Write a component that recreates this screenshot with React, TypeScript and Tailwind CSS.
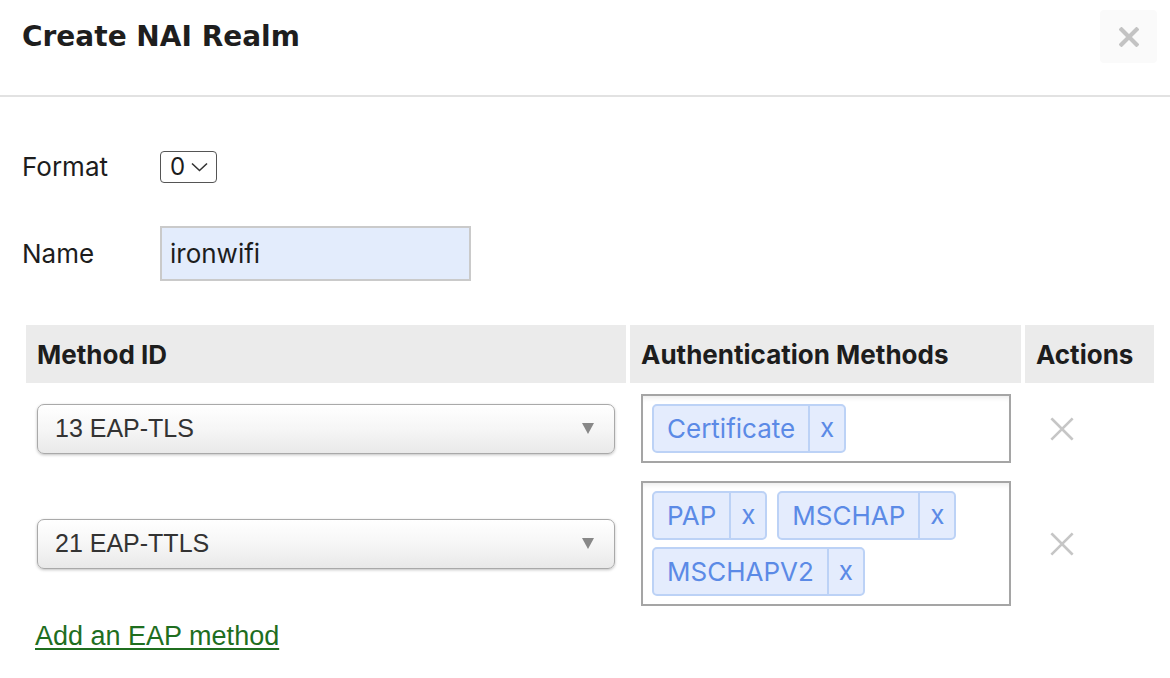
import React from "react"

const XIcon = ({ size, stroke, color }: { size: number; stroke: number; color: string }) => (
  <svg width={size} height={size} viewBox="0 0 24 24" fill="none">
    <path d="M3 3L21 21M21 3L3 21" stroke={color} strokeWidth={stroke} strokeLinecap="square" />
  </svg>
)

const MethodSelect = ({ value }: { value: string }) => (
  <div className="flex h-[50px] w-full items-center justify-between rounded-[7px] border border-[#a9a9a9] bg-gradient-to-b from-white via-[#f6f6f6] to-[#e9e9e9] pl-[17px] pr-[20px] shadow-[0_1px_3px_rgba(0,0,0,0.25)]">
    <span className="text-[25px] text-[#333]" style={{ fontFamily: '"Liberation Sans", Arial, sans-serif' }}>
      {value}
    </span>
    <svg width="12" height="11" viewBox="0 0 12 11">
      <polygon points="0,0 12,0 6,11" fill="#888" />
    </svg>
  </div>
)

const Chip = ({ label }: { label: string }) => (
  <div className="flex h-[49px] items-stretch rounded-[5px] border-2 border-[#bcd2f6] bg-[#e4ecfd] text-[26px] text-[#5b8ae6]">
    <span className="flex items-center px-[13px]">{label}</span>
    <span className="flex w-[36px] items-center justify-center border-l-2 border-[#bcd2f6] pb-[2px]">x</span>
  </div>
)

const AuthBox = ({ chips }: { chips: string[] }) => (
  <div className="flex w-[370px] flex-wrap gap-x-[10px] gap-y-[7px] border-2 border-[#a5a5a5] bg-white px-[9px] pt-[8px] pb-[8px] shadow-[inset_0_5px_5px_-3px_rgba(0,0,0,0.08)]">
    {chips.map((c) => (
      <Chip key={c} label={c} />
    ))}
  </div>
)

const rows = [
  { method: "13 EAP-TLS", chips: ["Certificate"] },
  { method: "21 EAP-TTLS", chips: ["PAP", "MSCHAP", "MSCHAPV2"] },
]

export default function App() {
  return (
    <div className="h-[678px] w-[1170px] overflow-hidden bg-white text-[#1d1d1d]" style={{ fontFamily: "Inter, sans-serif" }}>
      <div className="flex h-[97px] items-start justify-between border-b-2 border-[#e2e2e2] pl-[22px]">
        <h1 className="mt-[16px] text-[28px] font-bold text-[#1e1e1e]" style={{ fontFamily: '"DejaVu Sans", sans-serif' }}>
          Create NAI Realm
        </h1>
        <button className="mt-[10px] mr-[13px] flex h-[53px] w-[57px] items-center justify-center rounded bg-[#fafafa]">
          <XIcon size={20} stroke={5} color="#c3c3c3" />
        </button>
      </div>

      <div className="pl-[22px]">
        <div className="mt-[54px] flex items-center leading-[32px]">
          <span className="w-[138px] text-[26px]">Format</span>
          <div className="flex h-[32px] w-[57px] items-center justify-between rounded-[4px] border-[1.5px] border-[#555] pl-[9px] pr-[8px] text-[24px]">
            <span>0</span>
            <svg width="17" height="10" viewBox="0 0 17 10" fill="none">
              <path d="M1 1.5L8.5 8.5L16 1.5" stroke="#333" strokeWidth="1.6" />
            </svg>
          </div>
        </div>

        <div className="mt-[43px] flex items-center leading-[32px]">
          <span className="w-[138px] text-[26px]">Name</span>
          <div className="flex h-[55px] w-[311px] items-center border-2 border-[#cacaca] bg-[#e3ecfc] pl-[8px] text-[26px]">ironwifi</div>
        </div>

        <div className="mt-[44px] ml-[4px] grid w-[1128px] grid-cols-[600px_391px_129px] gap-x-[4px]">
          <div className="flex h-[58px] items-center bg-[#ebebeb] pl-[11px] text-[26px] font-bold">Method ID</div>
          <div className="flex h-[58px] items-center bg-[#ebebeb] pl-[11px] text-[26px] font-bold">Authentication Methods</div>
          <div className="flex h-[58px] items-center bg-[#ebebeb] pl-[11px] text-[26px] font-bold">Actions</div>

          {rows.map((r) => (
            <React.Fragment key={r.method}>
              <div className="flex items-center px-[11px] pt-[11px] pb-[7px]">
                <MethodSelect value={r.method} />
              </div>
              <div className="flex items-center pl-[11px] pt-[11px] pb-[7px]">
                <AuthBox chips={r.chips} />
              </div>
              <div className="flex items-center pl-[24px] pt-[11px] pb-[7px]">
                <XIcon size={26} stroke={2.4} color="#c6c6c6" />
              </div>
            </React.Fragment>
          ))}
        </div>

        <a
          href="#"
          className="mt-[3px] ml-[13px] inline-block text-[27px] text-[#1f6e1f] underline underline-offset-[3px]"
          style={{ fontFamily: '"Liberation Sans", Arial, sans-serif' }}
        >
          Add an EAP method
        </a>
      </div>
    </div>
  )
}
